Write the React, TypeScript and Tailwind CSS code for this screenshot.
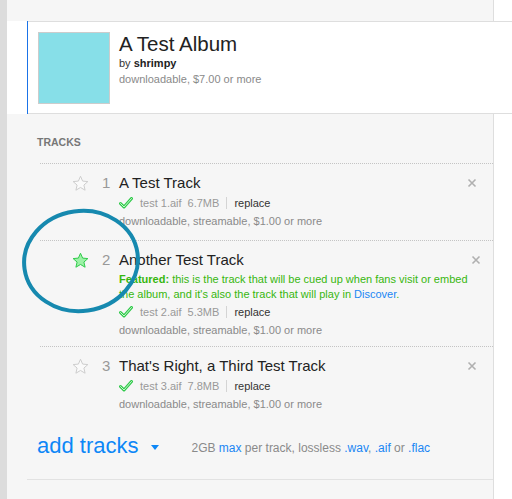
const font = { fontFamily: '"Liberation Sans", Arial, Helvetica, sans-serif' };

type Track = {
    n: number;
    title: string;
    file: string;
    size: string;
    featured?: boolean;
    pb: string;
};

const tracks: Track[] = [
    { n: 1, title: "A Test Track", file: "test 1.aif", size: "6.7MB", pb: "pb-[10px]" },
    { n: 2, title: "Another Test Track", file: "test 2.aif", size: "5.3MB", featured: true, pb: "pb-[7px]" },
    { n: 3, title: "That's Right, a Third Test Track", file: "test 3.aif", size: "7.8MB", pb: "pb-[10px]" },
];

const Star = ({ on }: { on?: boolean }) => (
    <svg width="17" height="17" viewBox="0 0 24 24" className="shrink-0">
        <polygon
            points="12,1.8 15,8.6 22.4,9.3 16.8,14.2 18.5,21.5 12,17.6 5.5,21.5 7.2,14.2 1.6,9.3 9,8.6"
            fill={on ? "#9cf2a6" : "#fafafa"}
            stroke={on ? "#2fc94a" : "#cccccc"}
            strokeWidth="1.4"
            strokeLinejoin="round"
        />
    </svg>
);

const Check = () => (
    <svg width="14" height="12" viewBox="0 0 14 12" className="shrink-0">
        <path d="M1.5 6.5 L5 10 L12.5 1.5" fill="none" stroke="#2fc94a" strokeWidth="3" strokeLinecap="round" strokeLinejoin="round" />
        <path d="M1.5 6.5 L5 10 L12.5 1.5" fill="none" stroke="#c9f7cd" strokeWidth="1" strokeLinecap="round" strokeLinejoin="round" />
    </svg>
);

const Close = () => (
    <svg width="10" height="10" viewBox="0 0 10 10">
        <path d="M1.5 1.5 L8.5 8.5 M8.5 1.5 L1.5 8.5" stroke="#b0b0b0" strokeWidth="1.6" />
    </svg>
);

const TrackRow = ({ t }: { t: Track }) => (
    <div className={`flex border-t border-dotted border-[#c4c4c4] pt-[9px] ${t.pb}`}>
        <div className="w-[79px] shrink-0 flex items-center h-[20px]">
            <div className="ml-[32px]"><Star on={t.featured} /></div>
            <span className="ml-[13px] text-[15px] text-[#999] leading-[20px]">{t.n}</span>
        </div>
        <div className="flex-1 pr-[16px]">
            <div className="flex items-center justify-between h-[20px]">
                <span className="text-[15px] text-[#222] leading-[20px]">{t.title}</span>
                <Close />
            </div>
            {t.featured && (
                <p className="mt-[2px] w-[362px] text-[11px] leading-[15px] text-[#36b60e]">
                    <b>Featured:</b> this is the track that will be cued up when fans visit or embed the album, and it's also the track that will play in{" "}
                    <span className="text-[#1a86f4]">Discover</span>.
                </p>
            )}
            <div className="mt-[1px] flex items-center h-[18px] text-[11px] text-[#999]">
                <Check />
                <span className="ml-[7px]">{t.file}</span>
                <span className="ml-[6px]">{t.size}</span>
                <span className="ml-[7px] mr-[7px] h-[12px] border-l border-[#d4d4d4]" />
                <span className="text-[#333]">replace</span>
            </div>
            <div className="h-[18px] leading-[18px] text-[11px] text-[#8a8a8a]">downloadable, streamable, $1.00 or more</div>
        </div>
    </div>
);

export default function App() {
    return (
        <div className="relative w-[512px] h-[499px] overflow-hidden flex bg-white" style={font}>
            <div className="w-[7px] shrink-0 bg-[#dcdcdc]" />
            <div className="flex-1 flex flex-col">
                <div className="h-[21px] w-[487px] shrink-0 bg-[#f6f6f6] border-r border-[#dedede]" />
                <div className="ml-[20px] h-[93px] shrink-0 flex bg-[#1a73e8] pl-[1px]">
                    <div className="flex-1 flex bg-white border-y border-[#dedede] pt-[10px] pl-[10px]">
                        <div className="w-[72px] h-[72px] bg-[#87dfe8] border border-[#cccccc]" />
                        <div className="ml-[9px]">
                            <div className="text-[20.5px] leading-[24px] text-[#222]">A Test Album</div>
                            <div className="text-[11px] leading-[15px] text-[#333]">
                                by <b className="text-[#222]">shrimpy</b>
                            </div>
                            <div className="text-[11px] leading-[16px] text-[#8a8a8a]">downloadable, $7.00 or more</div>
                        </div>
                    </div>
                </div>
                <div className="flex-1 w-[487px] bg-[#f6f6f6] border-r border-[#dedede]">
                    <div className="pt-[21px] pl-[30px] text-[10.5px] leading-[14px] font-bold text-[#777]">TRACKS</div>
                    <div className="mt-[14px] ml-[33px]">
                        {tracks.map((t) => (
                            <TrackRow key={t.n} t={t} />
                        ))}
                    </div>
                    <div className="mt-[9px] pl-[30px] flex items-center h-[28px]">
                        <span className="text-[22px] leading-[28px] text-[#0d87f7]">add tracks</span>
                        <svg width="8" height="5" viewBox="0 0 8 5" className="ml-[12px] mt-[2px]">
                            <polygon points="0,0 8,0 4,5" fill="#0d87f7" />
                        </svg>
                        <span className="ml-[33px] mt-[4px] text-[12px] text-[#8a8a8a]">
                            2GB <span className="text-[#1a86f4]">max</span> per track, lossless{" "}
                            <span className="text-[#1a86f4]">.wav</span>, <span className="text-[#1a86f4]">.aif</span> or{" "}
                            <span className="text-[#1a86f4]">.flac</span>
                        </span>
                    </div>
                    <div className="mt-[19px] ml-[20px] border-t border-[#e2e2e2]" />
                </div>
            </div>
            <svg className="absolute left-0 top-0 pointer-events-none" width="512" height="499">
                <ellipse cx="81" cy="261" rx="57" ry="50" fill="none" stroke="#1689af" strokeWidth="4" transform="rotate(-8 81 261)" />
            </svg>
        </div>
    );
}
